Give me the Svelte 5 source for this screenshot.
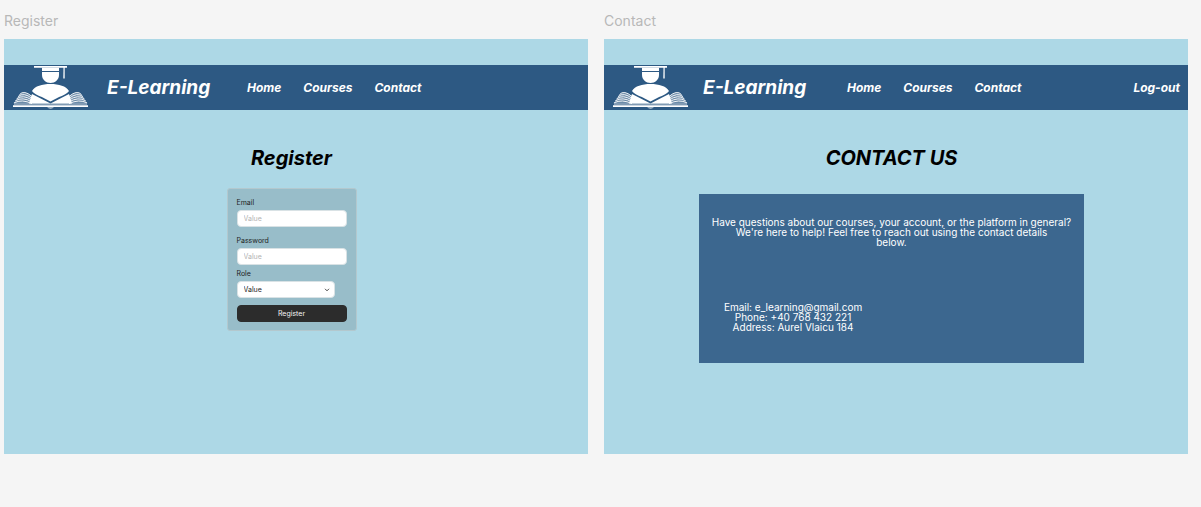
<script>
  let email = $state('');
  let password = $state('');
  let role = $state('');
  const links = ['Home', 'Courses', 'Contact'];
  const arcs = [0, 1, 2, 3, 4];
  const sides = ['', 'translate(77 0) scale(-1 1)'];
</script>

{#snippet header(signedIn)}
  <header class:signed-in={signedIn}>
    <svg class="logo" viewBox="0 0 78 45" aria-hidden="true">
      <g fill="#fff">
        <path d="M22 1H55V2.8H22Z" />
        <path d="M30 2.800H47V6H30Z" />
        <path d="M30 7H47V10C47 14.500 43 18 38.500 18S30 14.500 30 10Z" />
        <path d="M51.500 2H52.700V13.500H51.300Z" />
        <path d="M20 26C23 21 30 19 38.500 19S54 21 57 26C55 29.500 46 32 38.500 36.500C31 32 22 29.500 20 26Z" />
        <path d="M20 29L38.500 38.500L57 29L60 38.500H17Z" />
        <path d="M1 40.300H76V42H1Z" />
        <path d="M35 42.500H42Q38.500 44.500 35 42.500Z" />
      </g>
      <path d="M2 39H75" fill="none" stroke="#fff" stroke-width=".8" />
      {#each sides as side}
        <g transform={side}>
          <path d="M57 31Q65 25 70 30L75 38H58Z" fill="#fff" opacity=".3" />
          {#each arcs as i}
            <path d="M57 {31.500 + i * 1.8}Q{65 + i * .5} {24.500 + i * 2.300} {69.500 + i * 1.4} {29.500 + i * 2.1}" fill="none" stroke="#fff" stroke-width=".9" />
          {/each}
        </g>
      {/each}
    </svg>
    <span class="brand">E-Learning</span>
    <nav aria-label="Main">
      {#each links as link}
        <a href="#{link.toLowerCase()}">{link}</a>
      {/each}
    </nav>
    {#if signedIn}
      <a class="logout" href="#logout">Log-out</a>
    {/if}
  </header>
{/snippet}

<main>
  <section class="board">
    <h2>Register</h2>
    <div class="screen">
      {@render header(false)}
      <div class="content">
        <h1>Register</h1>
        <form onsubmit={(e) => e.preventDefault()}>
          <label for="email">Email</label>
          <input id="email" type="email" placeholder="Value" bind:value={email} />
          <label class="spaced" for="password">Password</label>
          <input id="password" type="password" placeholder="Value" bind:value={password} />
          <label for="role">Role</label>
          <div class="select">
            <select id="role" bind:value={role}>
              <option value="">Value</option>
            </select>
            <svg viewBox="0 0 6 4" aria-hidden="true"><path d="M1 .8L3 2.800L5 .8" fill="none" stroke="#1e1e1e" stroke-width=".8" /></svg>
          </div>
          <button type="submit">Register</button>
        </form>
      </div>
    </div>
  </section>

  <section class="board">
    <h2>Contact</h2>
    <div class="screen">
      {@render header(true)}
      <div class="content">
        <h1>CONTACT US</h1>
        <div class="panel">
          <p>
            Have questions about our courses, your account, or the platform in general?<br />
            We're here to help! Feel free to reach out using the contact details<br />
            below.
          </p>
          <address>
            Email: e_learning@gmail.com<br />
            Phone: +40 768 432 221<br />
            Address: Aurel Vlaicu 184
          </address>
        </div>
      </div>
    </div>
  </section>
</main>

<style>
  :global(body) {
    background: #f5f5f5;
    font-family: Inter, sans-serif;
  }
  main {
    display: grid;
    grid-template-columns: 1fr 1fr;
    gap: 16px;
    padding: 12px 13px 53px 4px;
  }
  h2 {
    margin: 0 0 9px;
    font-size: 14px;
    line-height: 18px;
    font-weight: 400;
    color: #b8b8b8;
  }
  .screen {
    box-sizing: border-box;
    min-height: 415px;
    padding-top: 26px;
    background: #add8e6;
  }
  .content {
    display: flex;
    flex-direction: column;
    align-items: center;
    padding: 36px 9px 0 0;
  }
  header {
    display: flex;
    align-items: center;
    box-sizing: border-box;
    height: 45px;
    padding: 0 8px;
    background: #2d5983;
    color: #fff;
    font-style: italic;
    font-weight: 700;
  }
  .logo {
    width: 78px;
    height: 45px;
    flex: none;
  }
  .brand {
    width: 140px;
    margin-left: 17px;
    font-size: 19px;
    line-height: 24px;
  }
  .signed-in .brand {
    width: 144px;
    margin-left: 13px;
  }
  nav {
    display: flex;
    gap: 22px;
  }
  a {
    color: inherit;
    font-size: 12px;
    line-height: 16px;
    text-decoration: none;
  }
  .logout {
    margin-left: auto;
  }
  h1 {
    margin: 0;
    font-size: 20px;
    line-height: 24px;
    font-style: italic;
    font-weight: 700;
    color: #000;
  }
  form {
    display: flex;
    flex-direction: column;
    box-sizing: border-box;
    width: 130px;
    margin-top: 18px;
    padding: 9px 9px 8px;
    border: 1px solid #b3c8ce;
    border-radius: 3px;
    background: #98bdc9;
  }
  label {
    margin-bottom: 3px;
    font-size: 7px;
    line-height: 9px;
    color: #1e1e1e;
  }
  input,
  select,
  button {
    box-sizing: border-box;
    width: 100%;
    height: 17px;
    margin: 0;
    padding: 0 6px;
    border: 1px solid #d9e2e5;
    border-radius: 4px;
    background: #fff;
    color: #1e1e1e;
    font: 7px/9px Inter, sans-serif;
  }
  input {
    margin-bottom: 4px;
  }
  input::placeholder {
    color: #b3b3b3;
  }
  .spaced {
    margin-top: 5px;
  }
  .select {
    position: relative;
    width: 98px;
    margin-bottom: 7px;
    display: flex;
  }
  select {
    appearance: none;
  }
  .select svg {
    position: absolute;
    right: 5px;
    top: 7px;
    width: 6px;
    height: 4px;
  }
  button {
    border-color: #2c2c2c;
    background: #2c2c2c;
    color: #f5f5f5;
  }
  .panel {
    box-sizing: border-box;
    width: 67%;
    min-height: 169px;
    margin-top: 24px;
    padding: 23px 10px;
    background: #3c678f;
    color: #fff;
    font-size: 10px;
    line-height: 10px;
    text-align: center;
  }
  p {
    margin: 0;
  }
  address {
    width: fit-content;
    margin: 55px 0 0 15px;
    font-style: normal;
  }
</style>
